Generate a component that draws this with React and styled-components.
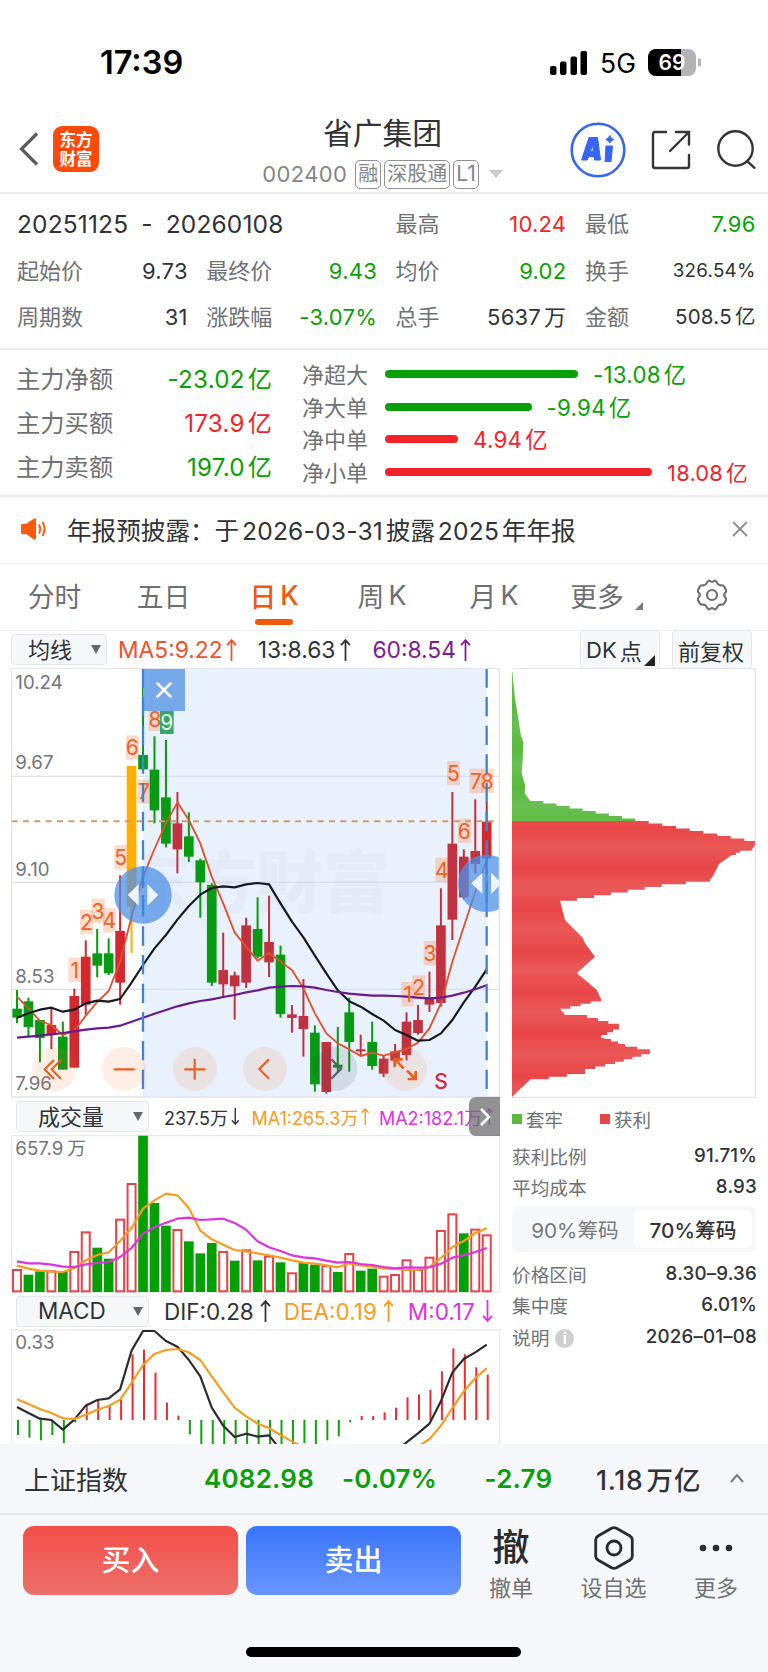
import React from 'react';
import styled, { createGlobalStyle } from 'styled-components';

const UP = '#f2242a';
const DOWN = '#08a008';

const GlobalStyle = createGlobalStyle`
  * { box-sizing: border-box; }
  body {
    margin: 0;
    background: #ffffff;
    color: #303236;
    font-family: Inter, "Noto Sans CJK SC", sans-serif;
  }
  svg { display: block; flex: none; }
`;

const Page = styled.div`
  width: 768px;
  height: 1672px;
  overflow: hidden;
  display: flex;
  flex-direction: column;
  white-space: nowrap;
`;

const StatusBar = styled.div`
  height: 104px;
  padding: 21px 67px 0 100px;
  display: flex;
  align-items: center;
  justify-content: space-between;
  color: #000;
`;
const Clock = styled.div`
  font-size: 32.5px;
  font-weight: 600;
`;
const StatusIcons = styled.div`
  display: flex;
  align-items: center;
  gap: 12px;
`;
const Network = styled.span`
  font-size: 26.5px;
  letter-spacing: 0;
`;

const Header = styled.header`
  height: 90px;
  flex: none;
  border-bottom: 2px solid #ececee;
  display: grid;
  grid-template-columns: 219px 1fr 222px;
`;
const HeaderLeft = styled.div`
  display: flex;
  align-items: center;
  gap: 14px;
  padding: 2px 0 0 19px;
`;
const Logo = styled.div`
  width: 46px;
  height: 46px;
  border-radius: 9px;
  background: #ff4a0a;
  color: #fff;
  font: 700 16.5px/19px "Noto Sans CJK SC", sans-serif;
  display: flex;
  align-items: center;
  justify-content: center;
  text-align: center;
  white-space: pre-line;
`;
const HeaderRight = styled.div`
  display: flex;
  align-items: center;
  justify-content: flex-end;
  gap: 24px;
  padding: 3px 12px 0 0;
`;
const TitleBlock = styled.div`
  display: flex;
  flex-direction: column;
  align-items: center;
`;
const Title = styled.h1`
  margin: 10px 0 0;
  font-size: 29.8px;
  font-weight: 400;
  line-height: 38px;
`;
const CodeRow = styled.div`
  display: flex;
  align-items: center;
  gap: 3px;
  height: 30px;
  margin-top: 7px;
  color: #858688;
  font-size: 22px;
`;
const Code = styled.span`
  letter-spacing: 0.4px;
  margin-right: 5px;
`;
const Tag = styled.span`
  height: 29px;
  padding: 0 2px;
  border: 1.5px solid #8f9092;
  border-radius: 5px;
  font-size: ${(p) => p.$size || 20}px;
  line-height: 26px;
`;
const CaretGap = styled.span`
  margin-left: 7px;
`;

const Stats = styled.section`
  height: 156px;
  flex: none;
  padding: 7px 13px 0 17px;
  border-bottom: 2px solid #ececee;
  display: grid;
  grid-template-columns: repeat(4, 170.5px);
  grid-auto-rows: 46.4px;
  column-gap: 18.8px;
`;
const Stat = styled.div`
  display: flex;
  align-items: center;
  justify-content: space-between;
  font-size: 22px;
  line-height: 30px;
`;
const Period = styled.div`
  grid-column: span 2;
  display: flex;
  align-items: center;
  font-size: 24.5px;
  letter-spacing: 0.15px;
  word-spacing: 6px;
`;
const Label = styled.span`
  color: #6f7175;
`;
const Value = styled.span`
  color: ${(p) => p.$color || '#303236'};
  font-size: ${(p) => p.$size || 22}px;
  letter-spacing: 0.25px;
  margin-right: -0.25px;
`;
const Unit = styled.span`
  margin-left: ${(p) => p.$gap || 3}px;
`;
const Spaced = styled.span`
  margin: 0 2.8px;
  letter-spacing: 0.2px;
`;

const Flows = styled.section`
  height: 147px;
  flex: none;
  border-bottom: 2px solid #ececee;
  display: grid;
  grid-template-columns: 256px 1fr;
  column-gap: 30px;
  padding: 5px 0 0 16px;
`;
const MainFlows = styled.div`
  display: flex;
  flex-direction: column;
`;
const MainFlow = styled.div`
  height: 44px;
  display: flex;
  align-items: center;
  justify-content: space-between;
  font-size: 24.3px;
`;
const OrderFlows = styled.div`
  display: flex;
  flex-direction: column;
  padding-top: 2px;
`;
const OrderFlow = styled.div`
  height: 32.6px;
  display: flex;
  align-items: center;
  font-size: 22px;
`;
const Bar = styled.span`
  height: 8px;
  margin: 2px 15px 0 17px;
  border-radius: 4px;
  width: ${(p) => p.$w}px;
  background: ${(p) => p.$color};
`;

const Notice = styled.div`
  height: 67px;
  flex: none;
  border-bottom: 1px solid #f0f0f2;
  display: flex;
  align-items: center;
  padding: 0 20px 3px 20px;
  font-size: 24.6px;
`;
const NoticeText = styled.span`
  flex: 1;
  padding-left: 19px;
`;

const Tabs = styled.nav`
  height: 67px;
  flex: none;
  border-bottom: 1px solid #f0f0f2;
  display: grid;
  grid-template-columns: 109px 109px 112px 104px 120px 86px 144px;
`;
const Tab = styled.div`
  display: flex;
  align-items: center;
  justify-content: center;
  padding-bottom: 4px;
  position: relative;
  color: ${(p) => (p.$active ? '#f05a0a' : '#6d6f73')};
  font-size: 26.8px;
  font-weight: ${(p) => (p.$active ? 500 : 400)};
`;
const TabLine = styled.span`
  position: absolute;
  bottom: 5px;
  width: 38px;
  height: 6px;
  border-radius: 3px;
  background: #f05a0a;
`;
const TabCorner = styled.span`
  position: absolute;
  right: -3px;
  bottom: 20px;
  border-style: solid;
  border-width: 0 0 8px 8px;
  border-color: transparent transparent #77797c transparent;
`;

const IndicatorBar = styled.div`
  height: 37px;
  flex: none;
  display: flex;
  align-items: center;
  padding: 0 16px 0 11px;
  font-size: 22.8px;
`;
const Select = styled.div`
  width: ${(p) => p.$w}px;
  height: 31px;
  background: #f6f7f9;
  border: 1.5px solid #e3e5ea;
  border-radius: 4px;
  display: flex;
  align-items: center;
  justify-content: space-between;
  padding: 0 5px 0 ${(p) => p.$pl}px;
  font-size: ${(p) => p.$size || 22}px;
  line-height: 26px;
  flex: none;
`;
const Reading = styled.span`
  color: ${(p) => p.$color || '#303236'};
  margin-left: ${(p) => p.$ml}px;
  display: flex;
  align-items: center;
  gap: ${(p) => p.$gap || 3}px;
`;
const BoxButton = styled.div`
  height: 39px;
  width: 80px;
  margin-left: ${(p) => p.$ml || 0};
  background: #f6f7f9;
  border: 1.5px solid #e3e5ea;
  border-radius: 4px;
  padding-left: 5px;
  display: flex;
  align-items: center;
  position: relative;
  font-size: 22px;
`;
const BoxCorner = styled.span`
  position: absolute;
  right: 4px;
  bottom: 2px;
  border-style: solid;
  border-width: 0 0 11px 11px;
  border-color: transparent transparent #222 transparent;
`;

const ChartArea = styled.main`
  height: 776px;
  flex: none;
  display: grid;
  grid-template-columns: 501px 255px;
`;
const Charts = styled.div`
  padding-left: 11px;
  overflow: hidden;
`;
const PaneHeader = styled.div`
  height: ${(p) => p.$h}px;
  padding-left: 5px;
  display: flex;
  align-items: center;
  position: relative;
  font-size: ${(p) => p.$size}px;
`;
const NextPane = styled.div`
  position: absolute;
  right: 1px;
  top: -1px;
  width: 31px;
  height: 39px;
  border-radius: 7px 0 0 7px;
  background: rgba(110, 110, 112, 0.75);
  display: flex;
  align-items: center;
  justify-content: center;
`;
const ChipPanel = styled.div`
  padding-left: 11px;
`;
const Legend = styled.div`
  height: 41px;
  display: flex;
  align-items: center;
  font-size: 18.5px;
  color: #6f7175;
`;
const LegendItem = styled.span`
  display: flex;
  align-items: center;
  gap: 4px;
  margin-right: 37px;
  &::before {
    content: '';
    width: 10px;
    height: 10px;
    background: ${(p) => p.$color};
  }
`;
const ChipRow = styled.div`
  height: ${(p) => p.$h || 31}px;
  display: flex;
  align-items: center;
  justify-content: space-between;
  font-size: 18.7px;
  color: #6f7175;
`;
const ChipValue = styled.span`
  color: #303236;
  font-weight: 500;
  letter-spacing: 0.2px;
  margin-right: -1px;
`;
const InfoDot = styled.span`
  display: inline-block;
  width: 19px;
  height: 19px;
  margin-left: 6px;
  border-radius: 50%;
  background: #cfcfd1;
  color: #fff;
  font-size: 15px;
  font-weight: 700;
  line-height: 19px;
  text-align: center;
  vertical-align: 1px;
`;
const Segmented = styled.div`
  height: 46px;
  margin: 6px 0 6px;
  padding: 4px;
  border-radius: 7px;
  background: #f6f7fa;
  display: grid;
  grid-template-columns: 1fr 1fr;
`;
const Segment = styled.div`
  display: flex;
  align-items: center;
  justify-content: center;
  border-radius: 6px;
  font-size: 20.7px;
  background: ${(p) => (p.$active ? '#fff' : 'transparent')};
  color: ${(p) => (p.$active ? '#303236' : '#77797d')};
  font-weight: ${(p) => (p.$active ? 500 : 400)};
`;

const Footer = styled.footer`
  flex: 1;
  background: #f6f7fa;
`;
const IndexRow = styled.div`
  height: 71px;
  border-bottom: 2px solid #e5e7ea;
  display: grid;
  grid-template-columns: 180px 138px 142.5px 111.5px 134px 1fr;
  align-items: center;
  padding: 0 0 1px 24px;
  font-size: 26px;
`;
const IndexValue = styled.span`
  font-size: ${(p) => (p.$color ? 26 : 26.5)}px;
  font-weight: ${(p) => (p.$color ? 600 : 500)};
  letter-spacing: ${(p) => (p.$color ? 0.2 : 0.8)}px;
  color: ${(p) => p.$color || '#303236'};
`;
const Actions = styled.div`
  display: flex;
  padding: 11px 0 0 23px;
  height: 122px;
`;
const TradeButton = styled.button`
  width: 215px;
  height: 69px;
  margin: 0 8px 0 0;
  padding: 0;
  border: 0;
  border-radius: 11px;
  background: linear-gradient(${(p) => p.$from}, ${(p) => p.$to});
  color: #fff;
  font: 500 29px/69px Inter, "Noto Sans CJK SC", sans-serif;
`;
const Action = styled.div`
  width: ${(p) => p.$w}px;
  display: flex;
  flex-direction: column;
  align-items: center;
  color: #6f7175;
  font-size: 22px;
  line-height: 30px;
`;
const ActionIcon = styled.div`
  height: 44px;
  display: flex;
  align-items: center;
  justify-content: center;
  color: #2a2b2e;
  font-size: 37px;
  font-weight: 500;
  line-height: 42px;
  margin-bottom: 3px;
`;
const HomeIndicator = styled.div`
  width: 275px;
  height: 10px;
  margin: 10px 0 0 246px;
  border-radius: 5px;
  background: #000;
`;

// Chart data. Every pane is drawn in units of a third of a pixel.
const STEP = 34.37;
const cx = (i) => 51 + i * STEP;
const line = (ys) => ys.map((y, i) => `${cx(i).toFixed(1)},${y}`).join(' ');

// [kind, high, body top, body bottom, low]
const candles = [
  ['g', 990, 1046, 1073, 1089], ['g', 1013, 1024, 1101, 1130], ['g', 1080, 1080, 1134, 1207],
  ['r', 1042, 1095, 1123, 1167], ['g', 1085, 1130, 1229, 1229], ['r', 986, 1008, 1223, 1223],
  ['r', 841, 890, 1034, 1064], ['g', 807, 880, 917, 951], ['g', 835, 880, 940, 945],
  ['r', 646, 813, 968, 1034], ['y', 318, 318, 740, 879], ['g', 25, 285, 328, 335],
  ['g', 229, 329, 451, 490], ['g', 240, 412, 551, 562], ['r', 396, 490, 568, 640],
  ['g', 457, 529, 590, 606], ['g', 596, 601, 667, 773], ['g', 670, 675, 968, 978],
  ['r', 818, 930, 973, 1010], ['r', 935, 946, 979, 1079], ['r', 773, 796, 968, 984],
  ['g', 712, 807, 890, 895], ['r', 707, 846, 907, 951], ['g', 857, 884, 1062, 1073],
  ['r', 1035, 1063, 1074, 1118], ['r', 957, 1068, 1107, 1190], ['g', 1096, 1118, 1273, 1295],
  ['r', 1146, 1146, 1296, 1301], ['g', 1101, 1214, 1223, 1235], ['g', 1013, 1057, 1146, 1235],
  ['r', 1124, 1168, 1174, 1190], ['g', 1085, 1146, 1218, 1229], ['r', 1185, 1196, 1241, 1251],
  ['r', 1152, 1174, 1202, 1212], ['r', 1057, 1085, 1185, 1201], ['r', 1035, 1080, 1119, 1124],
  ['r', 935, 1013, 1034, 1056], ['r', 685, 796, 1029, 1040], ['r', 396, 551, 779, 840],
  ['r', 568, 590, 712, 717], ['r', 418, 573, 612, 640], ['r', 425, 485, 595, 600],
];
const ma5 = [1010, 1045, 1083, 1095, 1125, 1113, 1067, 1026, 993, 905, 770, 650, 567, 490, 427, 480, 550, 650, 730, 818, 860, 902, 879, 905, 930, 985, 1060, 1120, 1150, 1168, 1188, 1178, 1187, 1177, 1167, 1148, 1105, 1030, 905, 800, 695, 600];
const ma13 = [1073, 1060, 1049, 1043, 1055, 1049, 1030, 1022, 1025, 1017, 968, 915, 865, 825, 779, 738, 704, 684, 679, 682, 673, 669, 673, 730, 785, 832, 887, 940, 991, 1024, 1040, 1062, 1082, 1110, 1125, 1142, 1140, 1120, 1080, 1027, 980, 928];
const ma60 = [1133, 1130, 1127, 1123, 1119, 1114, 1109, 1105, 1103, 1097, 1085, 1073, 1061, 1050, 1039, 1030, 1023, 1018, 1011, 1005, 997, 991, 983, 980, 978, 979, 983, 990, 996, 1001, 1004, 1007, 1007, 1008, 1010, 1013, 1015, 1013, 1007, 998, 988, 976];
// [text, x, y] of the sequence counts over the candles
const marks = [
  ['1', 224, 930], ['2', 259, 787], ['3', 294, 753], ['4', 328, 782], ['5', 362, 592],
  ['6', 397, 263], ['7', 432, 395], ['8', 465, 177], ['1', 1223, 1003], ['2', 1256, 983],
  ['3', 1290, 880], ['4', 1325, 630], ['5', 1360, 340], ['6', 1393, 513], ['7', 1428, 363],
  ['8', 1462, 363],
];
const volumes = [
  ['r', 522], ['g', 538], ['g', 528], ['r', 526], ['g', 528], ['r', 468], ['r', 409], ['g', 457], ['g', 490],
  ['r', 371], ['r', 264], ['g', 121], ['g', 323], ['g', 391], ['r', 402], ['g', 438], ['g', 474], ['g', 443],
  ['r', 468], ['g', 496], ['r', 463], ['g', 495], ['r', 482], ['g', 501], ['r', 532], ['g', 502], ['g', 508],
  ['r', 510], ['g', 530], ['r', 474], ['g', 526], ['g', 520], ['r', 542], ['r', 537], ['r', 493], ['r', 522],
  ['r', 485], ['r', 405], ['r', 355], ['g', 414], ['r', 401], ['r', 418],
];
const vol1 = [511, 520, 526, 529, 530, 518, 495, 479, 471, 437, 398, 340, 315, 295, 300, 338, 406, 432, 448, 464, 468, 474, 480, 487, 495, 502, 505, 510, 516, 504, 510, 514, 520, 521, 524, 524, 515, 488, 455, 437, 413, 399];
const vol2 = [498, 504, 504, 508, 514, 515, 507, 503, 500, 485, 458, 415, 396, 382, 370, 367, 374, 372, 370, 383, 403, 438, 456, 467, 480, 486, 489, 496, 502, 500, 506, 509, 515, 519, 516, 517, 516, 505, 487, 480, 470, 458];
const macd = [1018, 1026, 1034, 1018, 1043, 980, 924, 913, 932, 912, 776, 762, 831, 921, 960, 1016, 1060, 1060, 1060, 1060, 1060, 1060, 1060, 1060, 1060, 1042, 1060, 1034, 1022, 980, 961, 961, 950, 936, 905, 896, 883, 827, 758, 776, 815, 837];
const dif = [934, 952, 969, 973, 1002, 972, 930, 913, 908, 881, 765, 706, 706, 736, 753, 793, 842, 936, 990, 1024, 1014, 1023, 1019, 1062, 1100, 1120, 1130, 1135, 1140, 1135, 1130, 1120, 1100, 1068, 1040, 1013, 984, 917, 830, 790, 770, 747];
const dea = [911, 925, 940, 952, 968, 970, 957, 942, 931, 912, 862, 808, 775, 763, 760, 770, 793, 842, 890, 936, 962, 984, 997, 1018, 1037, 1055, 1075, 1090, 1100, 1105, 1110, 1110, 1105, 1095, 1080, 1053, 1030, 990, 937, 887, 847, 818];
// [y, x] outlines of the cost distribution, above and below the last price
const lossOutline = [
  [35, 37], [115, 45], [170, 54], [228, 63], [246, 70], [300, 68], [340, 65], [378, 76], [400, 74], [423, 91],
  [483, 405],
];
const gainOutline = [
  [483, 405], [543, 733], [544, 765], [556, 765], [570, 755], [572, 720], [585, 695], [612, 657], [652, 637],
  [658, 630], [673, 485], [722, 180], [780, 195], [833, 248], [850, 255], [890, 285], [940, 230],
  [965, 262], [990, 290], [1017, 303], [1046, 180], [1065, 195], [1074, 262], [1100, 357],
  [1133, 285], [1137, 312], [1160, 375], [1175, 450], [1205, 345], [1227, 255], [1234, 255], [1258, 92],
  [1285, 63], [1311, 36],
];

// steep parts of the outline show the price rows as steps
const chipPath = (outline) => {
  let d = `M36 ${outline[0][0]}`;
  for (let n = 1; n < outline.length; n += 1) {
    const [y0, x0] = outline[n - 1];
    const [y1, x1] = outline[n];
    const rows = Math.max(1, Math.round((y1 - y0) / 7.6));
    if (Math.abs(x1 - x0) / rows < 12) {
      d += ` L${x0} ${y0} L${x1} ${y1}`;
    } else {
      for (let k = 0; k < rows; k += 1) {
        const t = x1 > x0 ? (k + 1) / rows : k / rows;
        d += ` H${(x0 + (x1 - x0) * t).toFixed(1)} V${(y0 + ((y1 - y0) * (k + 1)) / rows).toFixed(1)}`;
      }
    }
  }
  return `${d} H36 Z`;
};

const Caret = () => (
  <svg width="10" height="9" viewBox="0 0 10 9"><path d="M0 0H10L5 9Z" fill="#66686c" /></svg>
);
const Arrow = ({ down, size = 22 }) => (
  <svg width={size * 0.5} height={size} viewBox="0 0 10 20" fill="none" stroke="currentColor" strokeWidth="1.6">
    <path d={down ? 'M5 0V19M1 14.5L5 19L9 14.5' : 'M5 20V1M1 5.5L5 1L9 5.5'} />
  </svg>
);

// puts a little air between the digits and the 万 / 亿 that follows them
const Num = ({ children }) => {
  const [digits, unit] = children.split(/(?=[万亿])(.*)/);
  return <>{digits}{unit && <Unit>{unit}</Unit>}</>;
};

const AxisLabel = styled.text`
  font-size: 56px;
  fill: #737579;
`;
const Mark = styled.text`
  font-size: 63px;
  font-weight: ${(p) => p.$weight || 400};
  text-anchor: middle;
  fill: ${(p) => p.$color || '#ee6224'};
`;
const Watermark = styled.text`
  font-size: 200px;
  font-weight: 900;
  fill: rgba(80, 100, 130, 0.04);
`;

function Handle({ x, y }) {
  return (
    <g>
      <circle cx={x} cy={y} r="86" fill="#4f90e6" opacity="0.75" />
      <path d={`M${x} ${y - 86}V${y + 86}`} stroke="#3b84df" strokeWidth="7" strokeDasharray="58 28" />
      <path d={`M${x - 46} ${y}L${x - 13} ${y - 32}V${y + 32}Z M${x + 46} ${y}L${x + 13} ${y - 32}V${y + 32}Z`} fill="#eef4fd" />
    </g>
  );
}

function CandleChart() {
  return (
    <svg width="489" height="430" viewBox="33 24 1467 1290">
      <rect x="429" y="25" width="1031" height="1286" fill="#e9f1fc" />
      {[349, 667, 988].map((y) => (
        <path key={y} d={`M35 ${y}H1500`} stroke="#dcdeeb" strokeWidth="4" />
      ))}
      <Watermark x="369" y="742">东方财富</Watermark>
      <AxisLabel x="46" y="88">10.24</AxisLabel>
      <AxisLabel x="46" y="328">9.67</AxisLabel>
      <AxisLabel x="46" y="648">9.10</AxisLabel>
      <AxisLabel x="46" y="969">8.53</AxisLabel>
      <AxisLabel x="46" y="1290">7.96</AxisLabel>
      {marks.map(([t, x, y]) => (
        <rect key={`${t}${x}`} x={x - 19} y={y - 37} width="39" height="73" fill="#ff7d45" opacity="0.28" />
      ))}
      {candles.map(([kind, hi, top, bottom, lo], i) => {
        const fill = kind === 'g' ? '#069b12' : kind === 'y' ? '#ffae00' : i > 11 && i < 41 ? '#c13240' : '#d3282d';
        return (
          <g key={i} fill={fill}>
            <rect x={cx(i) - 3} y={hi} width="6" height={lo - hi} />
            <rect x={cx(i) - 14.5} y={top} width="29" height={bottom - top} />
          </g>
        );
      })}
      <g fill="none" strokeWidth="5.5" strokeLinejoin="round">
        <polyline points={line(ma5)} stroke="#e0502f" />
        <polyline points={line(ma13)} stroke="#141a22" strokeWidth="6.5" />
        <polyline points={line(ma60)} stroke="#6a1a8c" strokeWidth="6.5" />
      </g>
      <path d="M35 484H1497" stroke="#cc9f6a" strokeWidth="6" strokeDasharray="18 16" />
      {marks.map(([t, x, y]) => (
        <Mark key={`${t}${x}`} x={x} y={y + 23}>{t}</Mark>
      ))}
      <rect x="480" y="149" width="41" height="73" fill="#36a766" />
      <Mark x="500" y="209" $color="#e8fff0">9</Mark>
      <rect x="429" y="25" width="126" height="128" fill="#76a9ea" />
      <path d="M470 68L514 112M514 68L470 112" stroke="#fff" strokeWidth="8" />
      <g stroke="#3b84df" strokeWidth="7" strokeDasharray="58 28">
        <path d="M429 25V1311M1460 25V1311" />
      </g>
      <Handle x={429} y={705} />
      <Handle x={1460} y={670} />
      <g fill="#f77433" fillOpacity="0.12">
        {[162, 372, 585, 795, 1215].map((x) => <circle key={x} cx={x} cy="1227" r="66" />)}
      </g>
      <circle cx="1006" cy="1227" r="66" fill="#333c4a" fillOpacity="0.12" />
      <g fill="none" stroke="#e8611f" strokeWidth="6.5">
        <path d="M162 1200L134 1228L162 1257M183 1200L155 1228L183 1257" />
        <path d="M341 1228H404M553 1228H616M584 1196V1259" />
        <path d="M807 1198L778 1227L807 1256" />
        <path d="M1211 1225L1185 1199M1184 1222V1198H1208M1221 1232L1246 1257M1247 1233V1257H1223" strokeWidth="8" />
        <path d="M994 1198L1023 1227L994 1256" stroke="#5b6068" />
      </g>
      <Mark x="1323" y="1287" $color="#d12c3c" $weight={500}>S</Mark>
      <path d="M35 25H1498V1311H35Z" fill="none" stroke="#e2e4ee" strokeWidth="4" />
    </svg>
  );
}

function VolumeChart() {
  return (
    <svg width="489" height="158" viewBox="33 119 1467 474">
      <path d="M35 121H1498V590H35Z" fill="none" stroke="#e9eaf0" strokeWidth="4" />
      {volumes.map(([kind, y], i) => (kind === 'g'
        ? <rect key={i} x={cx(i) - 14.5} y={y} width="29" height={590 - y} fill="#03a003" />
        : <rect key={i} x={cx(i) - 12} y={y + 2} width="24" height={586 - y} fill="#fff" stroke="#ea4346" strokeWidth="6" />))}
      <g fill="none" strokeWidth="6.5" strokeLinejoin="round">
        <polyline points={line(vol1)} stroke="#f89c20" />
        <polyline points={line(vol2)} stroke="#de32e0" />
      </g>
      <AxisLabel x="46" y="178">657.9<tspan dx="12">万</tspan></AxisLabel>
    </svg>
  );
}

function MacdChart() {
  return (
    <svg width="489" height="116" viewBox="33 700 1467 348">
      <path d="M35 1060V703H1498V1060" fill="none" stroke="#e9eaf0" strokeWidth="4" />
      {macd.map((y, i) => (
        <path key={i} d={`M${cx(i) + 3} 973V${y}`} stroke={y > 973 ? '#12a012' : '#ea2b30'} strokeWidth="6" />
      ))}
      <g fill="none" strokeWidth="6.5" strokeLinejoin="round">
        <polyline points={line(dif)} stroke="#2a2b2e" />
        <polyline points={line(dea)} stroke="#f89c20" />
      </g>
      <AxisLabel x="46" y="760">0.33</AxisLabel>
    </svg>
  );
}

function ChipChart() {
  return (
    <svg width="244" height="430" viewBox="36 24 732 1290">
      <defs>
        <linearGradient id="lossFill" gradientUnits="userSpaceOnUse" x1="0" y1="257" x2="0" y2="380" spreadMethod="repeat">
          <stop offset="0" stopColor="#58b83c" />
          <stop offset="0.45" stopColor="#69c052" />
          <stop offset="1" stopColor="#5ab93e" />
        </linearGradient>
        <linearGradient id="gainFill" gradientUnits="userSpaceOnUse" x1="0" y1="504" x2="0" y2="627.5" spreadMethod="repeat">
          <stop offset="0" stopColor="#e84646" />
          <stop offset="0.45" stopColor="#ea5958" />
          <stop offset="1" stopColor="#e84646" />
        </linearGradient>
      </defs>
      <path d="M36 25H766V1312H36" fill="none" stroke="#e2e4ee" strokeWidth="4" />
      <path d={chipPath(lossOutline)} fill="url(#lossFill)" />
      <path d={chipPath(gainOutline)} fill="url(#gainFill)" />
    </svg>
  );
}

const stats = [
  ['最高', '10.24', UP], ['最低', '7.96', DOWN],
  ['起始价', '9.73'], ['最终价', '9.43', DOWN], ['均价', '9.02', DOWN], ['换手', '326.54%', null, 18.8],
  ['周期数', '31'], ['涨跌幅', '-3.07%', DOWN], ['总手', '5637万'], ['金额', '508.5亿', null, 20.5],
];
const mainFlows = [['主力净额', '-23.02亿', DOWN], ['主力买额', '173.9亿', UP], ['主力卖额', '197.0亿', DOWN]];
const orderFlows = [
  ['净超大', '-13.08亿', DOWN, 193], ['净大单', '-9.94亿', DOWN, 146.5],
  ['净中单', '4.94亿', UP, 73], ['净小单', '18.08亿', UP, 267, 21.8],
];

function TopBars() {
  return (
    <>
      <StatusBar>
        <Clock>17:39</Clock>
        <StatusIcons>
          <svg width="38" height="24" viewBox="0 0 38 24">
            <rect x="0" y="15" width="6.500" height="9" rx="2" />
            <rect x="10" y="10.500" width="6.500" height="13.500" rx="2" />
            <rect x="20.500" y="5.500" width="6.500" height="18.500" rx="2" />
            <rect x="30.500" y="0" width="6.500" height="24" rx="2" />
          </svg>
          <Network>5G</Network>
          <svg width="53" height="27" viewBox="0 0 53 27">
            <rect width="48" height="27" rx="8" fill="#b3b3b5" />
            <path d="M8 0H33V27H8A8 8 0 0 1 0 19V8A8 8 0 0 1 8 0Z" />
            <path d="M50 9.500a4 4 0 0 1 0 8Z" fill="#b3b3b5" />
            <text x="24" y="21" fill="#fff" fontSize="21" fontWeight="600" textAnchor="middle">69</text>
          </svg>
        </StatusIcons>
      </StatusBar>
      <Header>
        <HeaderLeft>
          <svg width="20" height="34" viewBox="0 0 20 34"><path d="M18 1.500L2.500 17L18 32.500" fill="none" stroke="#5a5b5e" strokeWidth="3.200" /></svg>
          <Logo>{'东方\n财富'}</Logo>
        </HeaderLeft>
        <TitleBlock>
          <Title>省广集团</Title>
          <CodeRow>
            <Code>002400</Code>
            <Tag>融</Tag>
            <Tag>深股通</Tag>
            <Tag $size={21}>L1</Tag>
            <CaretGap><svg width="14" height="8" viewBox="0 0 14 8"><path d="M0 0H14L7 8Z" fill="#c8c9cb" /></svg></CaretGap>
          </CodeRow>
        </TitleBlock>
        <HeaderRight>
          <svg width="57" height="56" viewBox="0 0 57 56">
            <circle cx="28" cy="28" r="26.300" fill="#fff" stroke="#3766f4" strokeWidth="2.600" />
            <g fill="#3766f4" fillRule="evenodd" stroke="#3766f4" strokeWidth="1" strokeLinejoin="round">
              <path d="M11.500 38L19 15.500H27.500L30.500 38H24.500L23.900 34.500H18.800L17 38ZM20.300 29.500H23.200L22.700 23Z" />
              <path d="M36 24H42.500L41 39.500H35Z" />
              <path d="M39.800 13.500L41.200 16.200L43.800 17.500L41.200 18.800L39.800 21.200L38.400 18.800L35.800 17.500L38.400 16.200Z" />
            </g>
          </svg>
          <svg width="41" height="40" viewBox="0 0 41 40" fill="none" stroke="#333538" strokeWidth="2.400" strokeLinecap="round">
            <path d="M15 2H4Q2 2 2 4V36Q2 38 4 38H36Q38 38 38 36V25" />
            <path d="M19 21L37.500 2.500M25 2H38V14.500" />
          </svg>
          <svg width="40" height="40" viewBox="0 0 40 40" fill="none" stroke="#333538" strokeWidth="2.400" strokeLinecap="round">
            <circle cx="19.500" cy="18.500" r="17.200" />
            <path d="M31 31L38.500 37.800" />
          </svg>
        </HeaderRight>
      </Header>
    </>
  );
}

function App() {
  return (
    <Page>
      <GlobalStyle />
      <TopBars />
      <Stats>
        <Period>20251125 - 20260108</Period>
        {stats.map(([label, value, color, size]) => (
          <Stat key={label}>
            <Label>{label}</Label>
            <Value $color={color} $size={size}><Num>{value}</Num></Value>
          </Stat>
        ))}
      </Stats>
      <Flows>
        <MainFlows>
          {mainFlows.map(([label, value, color]) => (
            <MainFlow key={label}>
              <Label>{label}</Label>
              <Value $color={color} $size={24.2}><Num>{value}</Num></Value>
            </MainFlow>
          ))}
        </MainFlows>
        <OrderFlows>
          {orderFlows.map(([label, value, color, w, size]) => (
            <OrderFlow key={label}>
              <Label>{label}</Label>
              <Bar $w={w} $color={color} />
              <Value $color={color} $size={size || 22.3}><Num>{value}</Num></Value>
            </OrderFlow>
          ))}
        </OrderFlows>
      </Flows>
      <Notice>
        <svg width="28" height="24" viewBox="0 0 28 24">
          <path d="M1 8Q1 7 2 7H6L14 1.500Q16 0.500 16 3V21Q16 23.500 14 22.500L6 17H2Q1 17 1 16Z" fill="#ff5a0a" />
          <path d="M19 7.500Q21.500 12 19 16.500M22.500 5Q26.500 12 22.500 19" fill="none" stroke="#ff5a0a" strokeWidth="2" />
        </svg>
        <NoticeText>年报预披露：于<Spaced>2026-03-31</Spaced>披露<Spaced>2025</Spaced>年年报</NoticeText>
        <svg width="16" height="16" viewBox="0 0 16 16"><path d="M1 1L15 15M15 1L1 15" stroke="#8b8d90" strokeWidth="1.800" /></svg>
      </Notice>
      <Tabs>
        <Tab>分时</Tab>
        <Tab>五日</Tab>
        <Tab $active>日<Unit $gap={4}>K</Unit><TabLine /></Tab>
        <Tab>周<Unit $gap={4}>K</Unit></Tab>
        <Tab>月<Unit $gap={4}>K</Unit></Tab>
        <Tab>更多<TabCorner /></Tab>
        <Tab>
          <svg width="32" height="32" viewBox="0 0 32 32" fill="none" stroke="#6d6f73" strokeWidth="2.200" strokeLinejoin="round">
            <path d="M11 3.500Q12.500 1 14 2Q16 3.600 18 2Q19.500 1 21 3.500L22 5Q23 6.500 25 6.300Q27.500 6 28.500 8L30 11Q30.600 12.600 29 14Q27.500 16 29 18Q30.600 19.400 30 21L28.500 24Q27.500 26 25 25.700Q23 25.500 22 27L21 28.500Q19.500 31 18 30Q16 28.400 14 30Q12.500 31 11 28.500L10 27Q9 25.500 7 25.700Q4.500 26 3.500 24L2 21Q1.400 19.400 3 18Q4.500 16 3 14Q1.400 12.600 2 11L3.500 8Q4.500 6 7 6.300Q9 6.500 10 5Z" />
            <circle cx="16" cy="16" r="5" />
          </svg>
        </Tab>
      </Tabs>
      <IndicatorBar>
        <Select $w={96} $pl={16}>均线<Caret /></Select>
        <Reading $color="#f0512d" $ml={11}>MA5:9.22<Arrow /></Reading>
        <Reading $ml={21} $gap={5}>13:8.63<Arrow /></Reading>
        <Reading $color="#7d1b96" $ml={21} $gap={4}>60:8.54<Arrow /></Reading>
        <BoxButton $ml="auto">DK<Unit>点</Unit><BoxCorner /></BoxButton>
        <BoxButton $ml="12px">前复权</BoxButton>
      </IndicatorBar>
      <ChartArea>
        <Charts>
          <CandleChart />
          <PaneHeader $h={37} $size={18}>
            <Select $w={133} $pl={21}>成交量<Caret /></Select>
            <Reading $ml={15}>237.5万<Arrow down size={17} /></Reading>
            <Reading $color="#f89c20" $ml={12}>MA1:265.3万<Arrow size={17} /></Reading>
            <Reading $color="#de32e0" $ml={9}>MA2:182.1万<Arrow size={17} /></Reading>
            <NextPane>
              <svg width="12" height="20" viewBox="0 0 12 20"><path d="M2 2L10 10L2 18" fill="none" stroke="#fff" strokeWidth="2.600" /></svg>
            </NextPane>
          </PaneHeader>
          <VolumeChart />
          <PaneHeader $h={36} $size={22.5}>
            <Select $w={133} $pl={21} $size={22.5}>MACD<Caret /></Select>
            <Reading $ml={15} $gap={6}>DIF:0.28<Arrow size={22} /></Reading>
            <Reading $color="#f89c20" $ml={13} $gap={6}>DEA:0.19<Arrow size={22} /></Reading>
            <Reading $color="#de32e0" $ml={14} $gap={7}>M:0.17<Arrow down size={22} /></Reading>
          </PaneHeader>
          <MacdChart />
        </Charts>
        <ChipPanel>
          <ChipChart />
          <Legend>
            <LegendItem $color="#5ab93e">套牢</LegendItem>
            <LegendItem $color="#e84646">获利</LegendItem>
          </Legend>
          <ChipRow $h={33}>获利比例<ChipValue>91.71%</ChipValue></ChipRow>
          <ChipRow $h={28}>平均成本<ChipValue>8.93</ChipValue></ChipRow>
          <Segmented>
            <Segment>90%筹码</Segment>
            <Segment $active>70%筹码</Segment>
          </Segmented>
          <ChipRow>价格区间<ChipValue>8.30–9.36</ChipValue></ChipRow>
          <ChipRow $h={30}>集中度<ChipValue>6.01%</ChipValue></ChipRow>
          <ChipRow $h={34}><span>说明<InfoDot>i</InfoDot></span><ChipValue>2026–01–08</ChipValue></ChipRow>
        </ChipPanel>
      </ChartArea>
      <Footer>
        <IndexRow>
          <span>上证指数</span>
          <IndexValue $color={DOWN}>4082.98</IndexValue>
          <IndexValue $color={DOWN}>-0.07%</IndexValue>
          <IndexValue $color={DOWN}>-2.79</IndexValue>
          <IndexValue><Num>1.18万亿</Num></IndexValue>
          <svg width="14" height="10" viewBox="0 0 14 10"><path d="M1 9L7 2L13 9" fill="none" stroke="#77797c" strokeWidth="2" /></svg>
        </IndexRow>
        <Actions>
          <TradeButton $from="#f44e48" $to="#ec6f6a">买入</TradeButton>
          <TradeButton $from="#3a76fb" $to="#6a95fc">卖出</TradeButton>
          <Action $w={84}><ActionIcon>撤</ActionIcon>撤单</Action>
          <Action $w={121}>
            <ActionIcon>
              <svg width="42" height="44" viewBox="0 0 42 44" fill="none" stroke="#2a2b2e" strokeWidth="2.800">
                <path d="M18.500 2.200Q21 1 23.500 2.200L37 10Q39.300 11.500 39.300 14V30Q39.300 32.500 37 34L23.500 41.800Q21 43 18.500 41.800L5 34Q2.700 32.500 2.700 30V14Q2.700 11.500 5 10Z" />
                <circle cx="21" cy="22" r="7" />
              </svg>
            </ActionIcon>
            设自选
          </Action>
          <Action $w={84}>
            <ActionIcon>
              <svg width="34" height="8" viewBox="0 0 34 8" fill="#2a2b2e"><circle cx="4" cy="4" r="3.300" /><circle cx="17" cy="4" r="3.300" /><circle cx="30" cy="4" r="3.300" /></svg>
            </ActionIcon>
            更多
          </Action>
        </Actions>
        <HomeIndicator />
      </Footer>
    </Page>
  );
}

export default App;
